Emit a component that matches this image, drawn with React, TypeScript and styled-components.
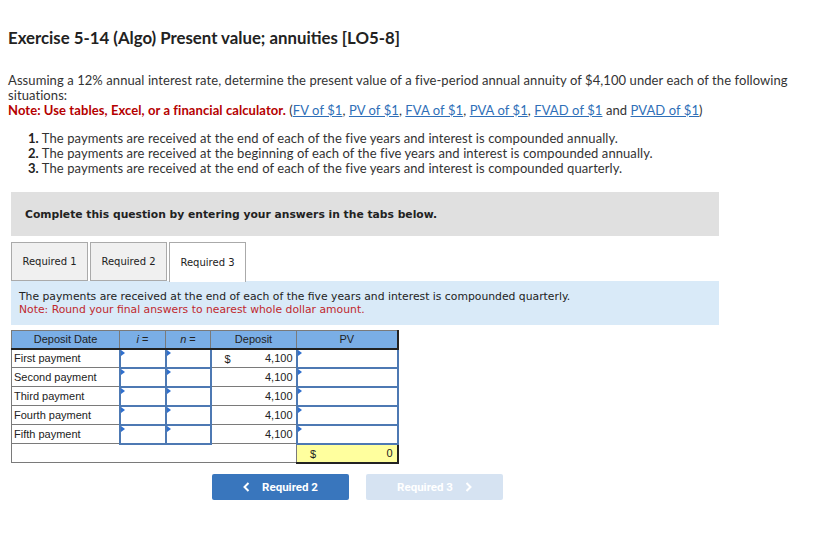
import React from 'react';
import styled, { createGlobalStyle } from 'styled-components';

const GlobalStyle = createGlobalStyle`
  body {
    margin: 0;
    background: #fff;
    font-family: Lato, "Open Sans", sans-serif;
    color: #333;
  }
`;

const Page = styled.div`
  width: 831px;
  padding: 28px 0 0 8px;
  box-sizing: border-box;
`;

const Title = styled.h1`
  margin: 0 0 25px;
  font-size: 16.8px;
  font-weight: 700;
  color: #222;
  line-height: 20px;
`;

const Prompt = styled.p`
  margin: 0;
  font-size: 13px;
  line-height: 15px;
  letter-spacing: 0.08px;
  color: #333;
`;

const Note = styled.span`
  color: #b50000;
  font-weight: 700;
`;

const Ref = styled.a`
  color: #2f6fb8;
  text-decoration: underline;
`;

const Steps = styled.ol`
  margin: 13px 0 0;
  padding: 0 0 0 20px;
  list-style: none;
  font-size: 13px;
  line-height: 15px;
  letter-spacing: 0.08px;
`;

const Step = styled.li`
  b {
    font-weight: 700;
    color: #222;
  }
`;

const Work = styled.div`
  margin: 16px 0 0 3px;
  width: 708px;
`;

const Banner = styled.div`
  background: #e0e0e0;
  height: 44px;
  display: flex;
  align-items: center;
  padding-left: 14px;
  font-family: "DejaVu Sans", Verdana, sans-serif;
  font-size: 10.75px;
  font-weight: 700;
  color: #222;
`;

const Tabs = styled.div`
  display: flex;
  gap: 2px;
  margin-top: 6px;
`;

const Tab = styled.div<{ $active?: boolean }>`
  width: 77px;
  height: ${(p) => (p.$active ? '40px' : '39px')};
  box-sizing: border-box;
  border: 1px solid #aaa;
  border-bottom: ${(p) => (p.$active ? 'none' : '1px solid #aaa')};
  background: ${(p) => (p.$active ? '#fff' : '#f0f0f0')};
  display: flex;
  align-items: center;
  justify-content: center;
  font-family: "DejaVu Sans", Verdana, sans-serif;
  font-size: 10px;
  color: #222;
  margin-bottom: ${(p) => (p.$active ? '-1px' : '0')};
  position: relative;
`;

const Info = styled.div`
  background: #d9eaf8;
  padding: 9px 0 0 8px;
  height: 44px;
  box-sizing: border-box;
  font-family: "DejaVu Sans", Verdana, sans-serif;
  font-size: 10.8px;
  line-height: 13px;
  color: #222;
`;

const InfoNote = styled.div`
  color: #c0282d;
`;

const Grid = styled.table`
  margin-top: 5px;
  border-collapse: collapse;
  font-family: "Liberation Sans", Arial, sans-serif;
  font-size: 11px;
  color: #222;
`;

const Head = styled.th<{ $w: number }>`
  width: ${(p) => p.$w}px;
  height: 18px;
  box-sizing: border-box;
  background: #7aaee6;
  border: 1px solid #7a7a7a;
  border-bottom: 2px solid #222;
  font-weight: 400;
  padding: 0;
  text-align: center;
  &:last-child {
    border-right: 2px solid #222;
  }
`;

const Cell = styled.td`
  height: 19px;
  box-sizing: border-box;
  border: 1px solid #7a7a7a;
  padding: 0 2px;
  white-space: nowrap;
`;

const AmountCell = styled(Cell)`
  position: relative;
  text-align: right;
  padding-right: 3px;
`;

const Dollar = styled.span`
  position: absolute;
  left: 13px;
  top: 3px;
`;

const InputCell = styled.td`
  height: 19px;
  box-sizing: border-box;
  border: 2px solid #4d79b3;
  padding: 0;
  position: relative;
  background: #fff;
  &::before {
    content: '';
    position: absolute;
    left: 0;
    top: 0;
    border-left: 4px solid #2f6fce;
    border-top: 3px solid transparent;
    border-bottom: 3px solid transparent;
  }
`;

const TotalCell = styled.td`
  height: 19px;
  box-sizing: border-box;
  background: #ffff9e;
  border: 1px solid #7a7a7a;
  border-bottom: 2px solid #222;
  border-right: 2px solid #222;
  position: relative;
  text-align: right;
  padding: 0 4px;
`;

const Nav = styled.div`
  display: flex;
  gap: 17px;
  margin: 10px 0 0 201px;
`;

const NavButton = styled.button<{ $disabled?: boolean }>`
  width: 137px;
  height: 26px;
  border: none;
  border-radius: 2px;
  background: ${(p) => (p.$disabled ? '#d6e3f2' : '#3976bd')};
  color: #fff;
  font-family: Roboto, "Liberation Sans", sans-serif;
  font-weight: 700;
  font-size: 11.5px;
  display: flex;
  align-items: center;
  justify-content: center;
  gap: 12px;
  padding: 0;
`;

const Chevron = ({ dir }: { dir: 'left' | 'right' }) => (
  <svg width="7" height="10" viewBox="0 0 7 10">
    <path
      d={dir === 'left' ? 'M5.5 1 L1.5 5 L5.5 9' : 'M1.5 1 L5.5 5 L1.5 9'}
      fill="none"
      stroke="#fff"
      strokeWidth="2"
    />
  </svg>
);

const payments = ['First payment', 'Second payment', 'Third payment', 'Fourth payment', 'Fifth payment'];

export default function App() {
  return (
    <Page>
      <GlobalStyle />
      <Title>Exercise 5-14 (Algo) Present value; annuities [LO5-8]</Title>
      <Prompt>
        Assuming a 12% annual interest rate, determine the present value of a five-period annual annuity of $4,100
        under each of the following situations:
      </Prompt>
      <Prompt>
        <Note>Note: Use tables, Excel, or a financial calculator.</Note> (<Ref>FV of $1</Ref>, <Ref>PV of $1</Ref>,{' '}
        <Ref>FVA of $1</Ref>, <Ref>PVA of $1</Ref>, <Ref>FVAD of $1</Ref> and <Ref>PVAD of $1</Ref>)
      </Prompt>
      <Steps>
        <Step>
          <b>1.</b> The payments are received at the end of each of the five years and interest is compounded annually.
        </Step>
        <Step>
          <b>2.</b> The payments are received at the beginning of each of the five years and interest is compounded
          annually.
        </Step>
        <Step>
          <b>3.</b> The payments are received at the end of each of the five years and interest is compounded quarterly.
        </Step>
      </Steps>
      <Work>
        <Banner>Complete this question by entering your answers in the tabs below.</Banner>
        <Tabs>
          <Tab>Required 1</Tab>
          <Tab>Required 2</Tab>
          <Tab $active>Required 3</Tab>
        </Tabs>
        <Info>
          The payments are received at the end of each of the five years and interest is compounded quarterly.
          <InfoNote>Note: Round your final answers to nearest whole dollar amount.</InfoNote>
        </Info>
        <Grid>
          <thead>
            <tr>
              <Head $w={108}>Deposit Date</Head>
              <Head $w={46}>
                <i>i</i> =
              </Head>
              <Head $w={45}>
                <i>n</i> =
              </Head>
              <Head $w={86}>Deposit</Head>
              <Head $w={101}>PV</Head>
            </tr>
          </thead>
          <tbody>
            {payments.map((label, idx) => (
              <tr key={label}>
                <Cell>{label}</Cell>
                <InputCell />
                <InputCell />
                <AmountCell>
                  {idx === 0 && <Dollar>$</Dollar>}
                  4,100
                </AmountCell>
                <InputCell />
              </tr>
            ))}
            <tr>
              <Cell colSpan={4} />
              <TotalCell>
                <Dollar>$</Dollar>0
              </TotalCell>
            </tr>
          </tbody>
        </Grid>
        <Nav>
          <NavButton>
            <Chevron dir="left" />
            Required 2
          </NavButton>
          <NavButton $disabled>
            Required 3
            <Chevron dir="right" />
          </NavButton>
        </Nav>
      </Work>
    </Page>
  );
}
